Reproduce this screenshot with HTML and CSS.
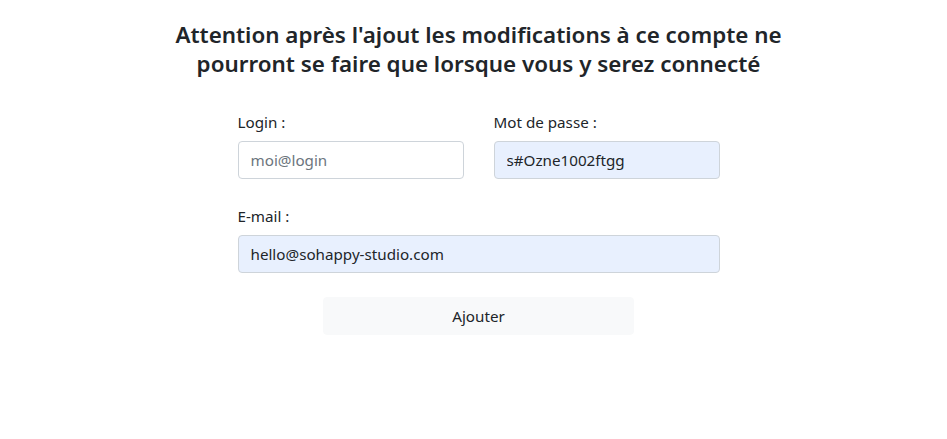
FILE: index.html
```html
<!DOCTYPE html>
<html lang="fr">
<head>
<meta charset="utf-8">
<title>Ajout de compte</title>
<link rel="stylesheet" href="styles.css">
</head>
<body>
<main class="page">
  <h4 class="title">Attention après l'ajout les modifications à ce compte ne pourront se faire que lorsque vous y serez connecté</h4>
  <form class="form">
    <div class="row">
      <div class="field">
        <label class="label" for="login">Login :</label>
        <input class="input" id="login" type="text" placeholder="moi@login">
      </div>
      <div class="field">
        <label class="label" for="pass">Mot de passe :</label>
        <input class="input filled" id="pass" type="text" value="s#Ozne1002ftgg">
      </div>
    </div>
    <div class="row">
      <div class="field wide">
        <label class="label" for="email">E-mail :</label>
        <input class="input filled" id="email" type="text" value="hello@sohappy-studio.com">
      </div>
    </div>
    <div class="actions">
      <button class="btn" type="button">Ajouter</button>
    </div>
  </form>
</main>
</body>
</html>
```
FILE: styles.css
```css
* { box-sizing: border-box; }
html, body { margin: 0; background: #fff; }
body {
  font-family: "Noto Sans", "Open Sans", Arial, sans-serif;
  color: #212529;
  font-size: 15.2px;
  line-height: 1.5;
}
.page {
  padding: 20px 0 0 10px;
  display: flex;
  flex-direction: column;
  align-items: center;
}
.title {
  margin: 0;
  width: 660px;
  text-align: center;
  font-size: 22.4px;
  font-weight: 600;
  line-height: 29px;
  color: #212529;
}
.form {
  margin-top: 32px;
  width: 482px;
  display: flex;
  flex-direction: column;
}
.row {
  display: flex;
  gap: 30px;
  margin-bottom: 25px;
}
.row + .row {
  margin-bottom: 23px;
}
.field {
  flex: 1 1 0;
  min-width: 0;
  display: flex;
  flex-direction: column;
}
.label {
  margin-bottom: 7px;
  line-height: 24px;
}
.input {
  width: 100%;
  min-width: 0;
  height: 38px;
  border: 1px solid #ced4da;
  border-radius: 4px;
  padding: 6px 12px;
  font: inherit;
  color: #212529;
  background: #fff;
}
.input::placeholder { color: #6c757d; }
.input.filled {
  background: #e8f0fe;
}
.actions {
  display: flex;
  justify-content: center;
  margin-top: 1px;
}
.btn {
  width: 311px;
  height: 38px;
  border: 1px solid #f8f9fa;
  background: #f8f9fa;
  border-radius: 4px;
  font: inherit;
  color: #212529;
}
```
